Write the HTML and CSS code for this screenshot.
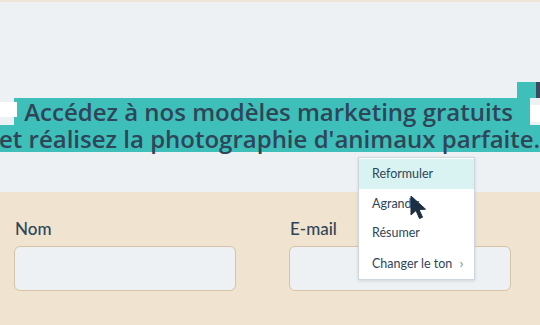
FILE: index.html
```html
<!DOCTYPE html>
<html lang="fr">
<head>
    <meta charset="UTF-8">
    <title>Modèles marketing</title>
    <link rel="stylesheet" href="styles.css">
</head>
<body>
    <div class="page">
        <section class="hero">
            <h1 class="headline">
                <span class="line line-one"><span class="mark">Accédez à nos modèles marketing gratuits</span></span>
                <span class="line line-two">et réalisez la photographie d'animaux parfaite.</span>
            </h1>
            <!-- poignées de sélection -->
            <span class="handle handle-left"></span>
            <span class="handle handle-right"></span>
            <span class="caret-block"></span>
        </section>

        <section class="form">
            <div class="field">
                <label for="nom">Nom</label>
                <input type="text" id="nom">
            </div>
            <div class="field">
                <label for="email">E-mail</label>
                <input type="text" id="email">
            </div>
        </section>

        <ul class="menu">
            <li class="active">Reformuler</li>
            <li>Agrandir</li>
            <li>Résumer</li>
            <li>Changer le ton <span class="chevron">&#8250;</span></li>
        </ul>

        <svg class="cursor" width="20" height="26" viewBox="0 0 20 26">
            <path d="M2 1 L2 20 L7 15.5 L10.5 23.5 L13.5 22.2 L10 14.5 L16.5 14.2 Z" fill="#1e2f42" stroke="#1e2f42" stroke-width="1" stroke-linejoin="round"/>
        </svg>
    </div>
</body>
</html>
```

FILE: styles.css
```css
:root {
    --text-color: #2f4558;
    --teal: #3fbfba;
    --hero-bg: #eef1f4;
    --form-bg: #f0e3cf;
    --field-border: #d8c3a6;
}

* {
    box-sizing: border-box;
}

body {
    margin: 0;
    font-family: Lato, "Noto Sans", sans-serif;
    color: var(--text-color);
    background: var(--form-bg);
}

.page {
    position: relative;
    width: 540px;
    height: 325px;
    overflow: hidden;
    border-top: 2px solid #efe4d8;
}

.hero {
    position: relative;
    height: 190px;
    background: var(--hero-bg);
    padding-top: 96px;
}

.headline {
    margin: 0;
    font-family: "Open Sans", "Noto Sans", sans-serif;
    font-size: 24px;
    font-weight: 600;
    line-height: 27px;
    text-align: center;
}

.line {
    display: block;
    white-space: nowrap;
}

.line-one .mark {
    display: inline-block;
    background: var(--teal);
    padding: 0 17px 0 10px;
    margin-left: 4px;
}

.line-two {
    background: var(--teal);
    margin-left: -1px;
}

.handle {
    position: absolute;
    background: #fff;
}

.handle-left {
    left: 0;
    top: 100px;
    width: 17px;
    height: 15px;
}

.handle-right {
    right: 0;
    top: 103px;
    width: 10px;
    height: 17px;
}

.caret-block {
    position: absolute;
    top: 80px;
    left: 517px;
    width: 23px;
    height: 16px;
    background: var(--teal);
    border-right: 4px solid #3a4a5c;
}

.form {
    display: grid;
    grid-template-columns: 222px 222px;
    column-gap: 53px;
    padding: 26px 14px 0;
}

.field label {
    display: block;
    font-size: 17px;
    font-weight: 500;
    margin: 0 0 7px 1px;
}

.field input {
    display: block;
    width: 100%;
    height: 45px;
    background: var(--hero-bg);
    border: 1px solid var(--field-border);
    border-radius: 6px;
}

.menu {
    position: absolute;
    left: 358px;
    top: 155px;
    width: 117px;
    margin: 0;
    padding: 1px 0 2px;
    list-style: none;
    background: #fff;
    border: 1px solid #cdd5de;
    box-shadow: 0 1px 3px rgba(0, 0, 0, 0.12);
}

.menu li {
    height: 29.5px;
    line-height: 30px;
    padding-left: 13px;
    font-size: 12.5px;
    white-space: nowrap;
    overflow: hidden;
}

.menu li.active {
    background: #d8f3f1;
}

.chevron {
    margin-left: 4px;
    color: #7b8a99;
    font-size: 14px;
}

.cursor {
    position: absolute;
    left: 409px;
    top: 193px;
}
```
